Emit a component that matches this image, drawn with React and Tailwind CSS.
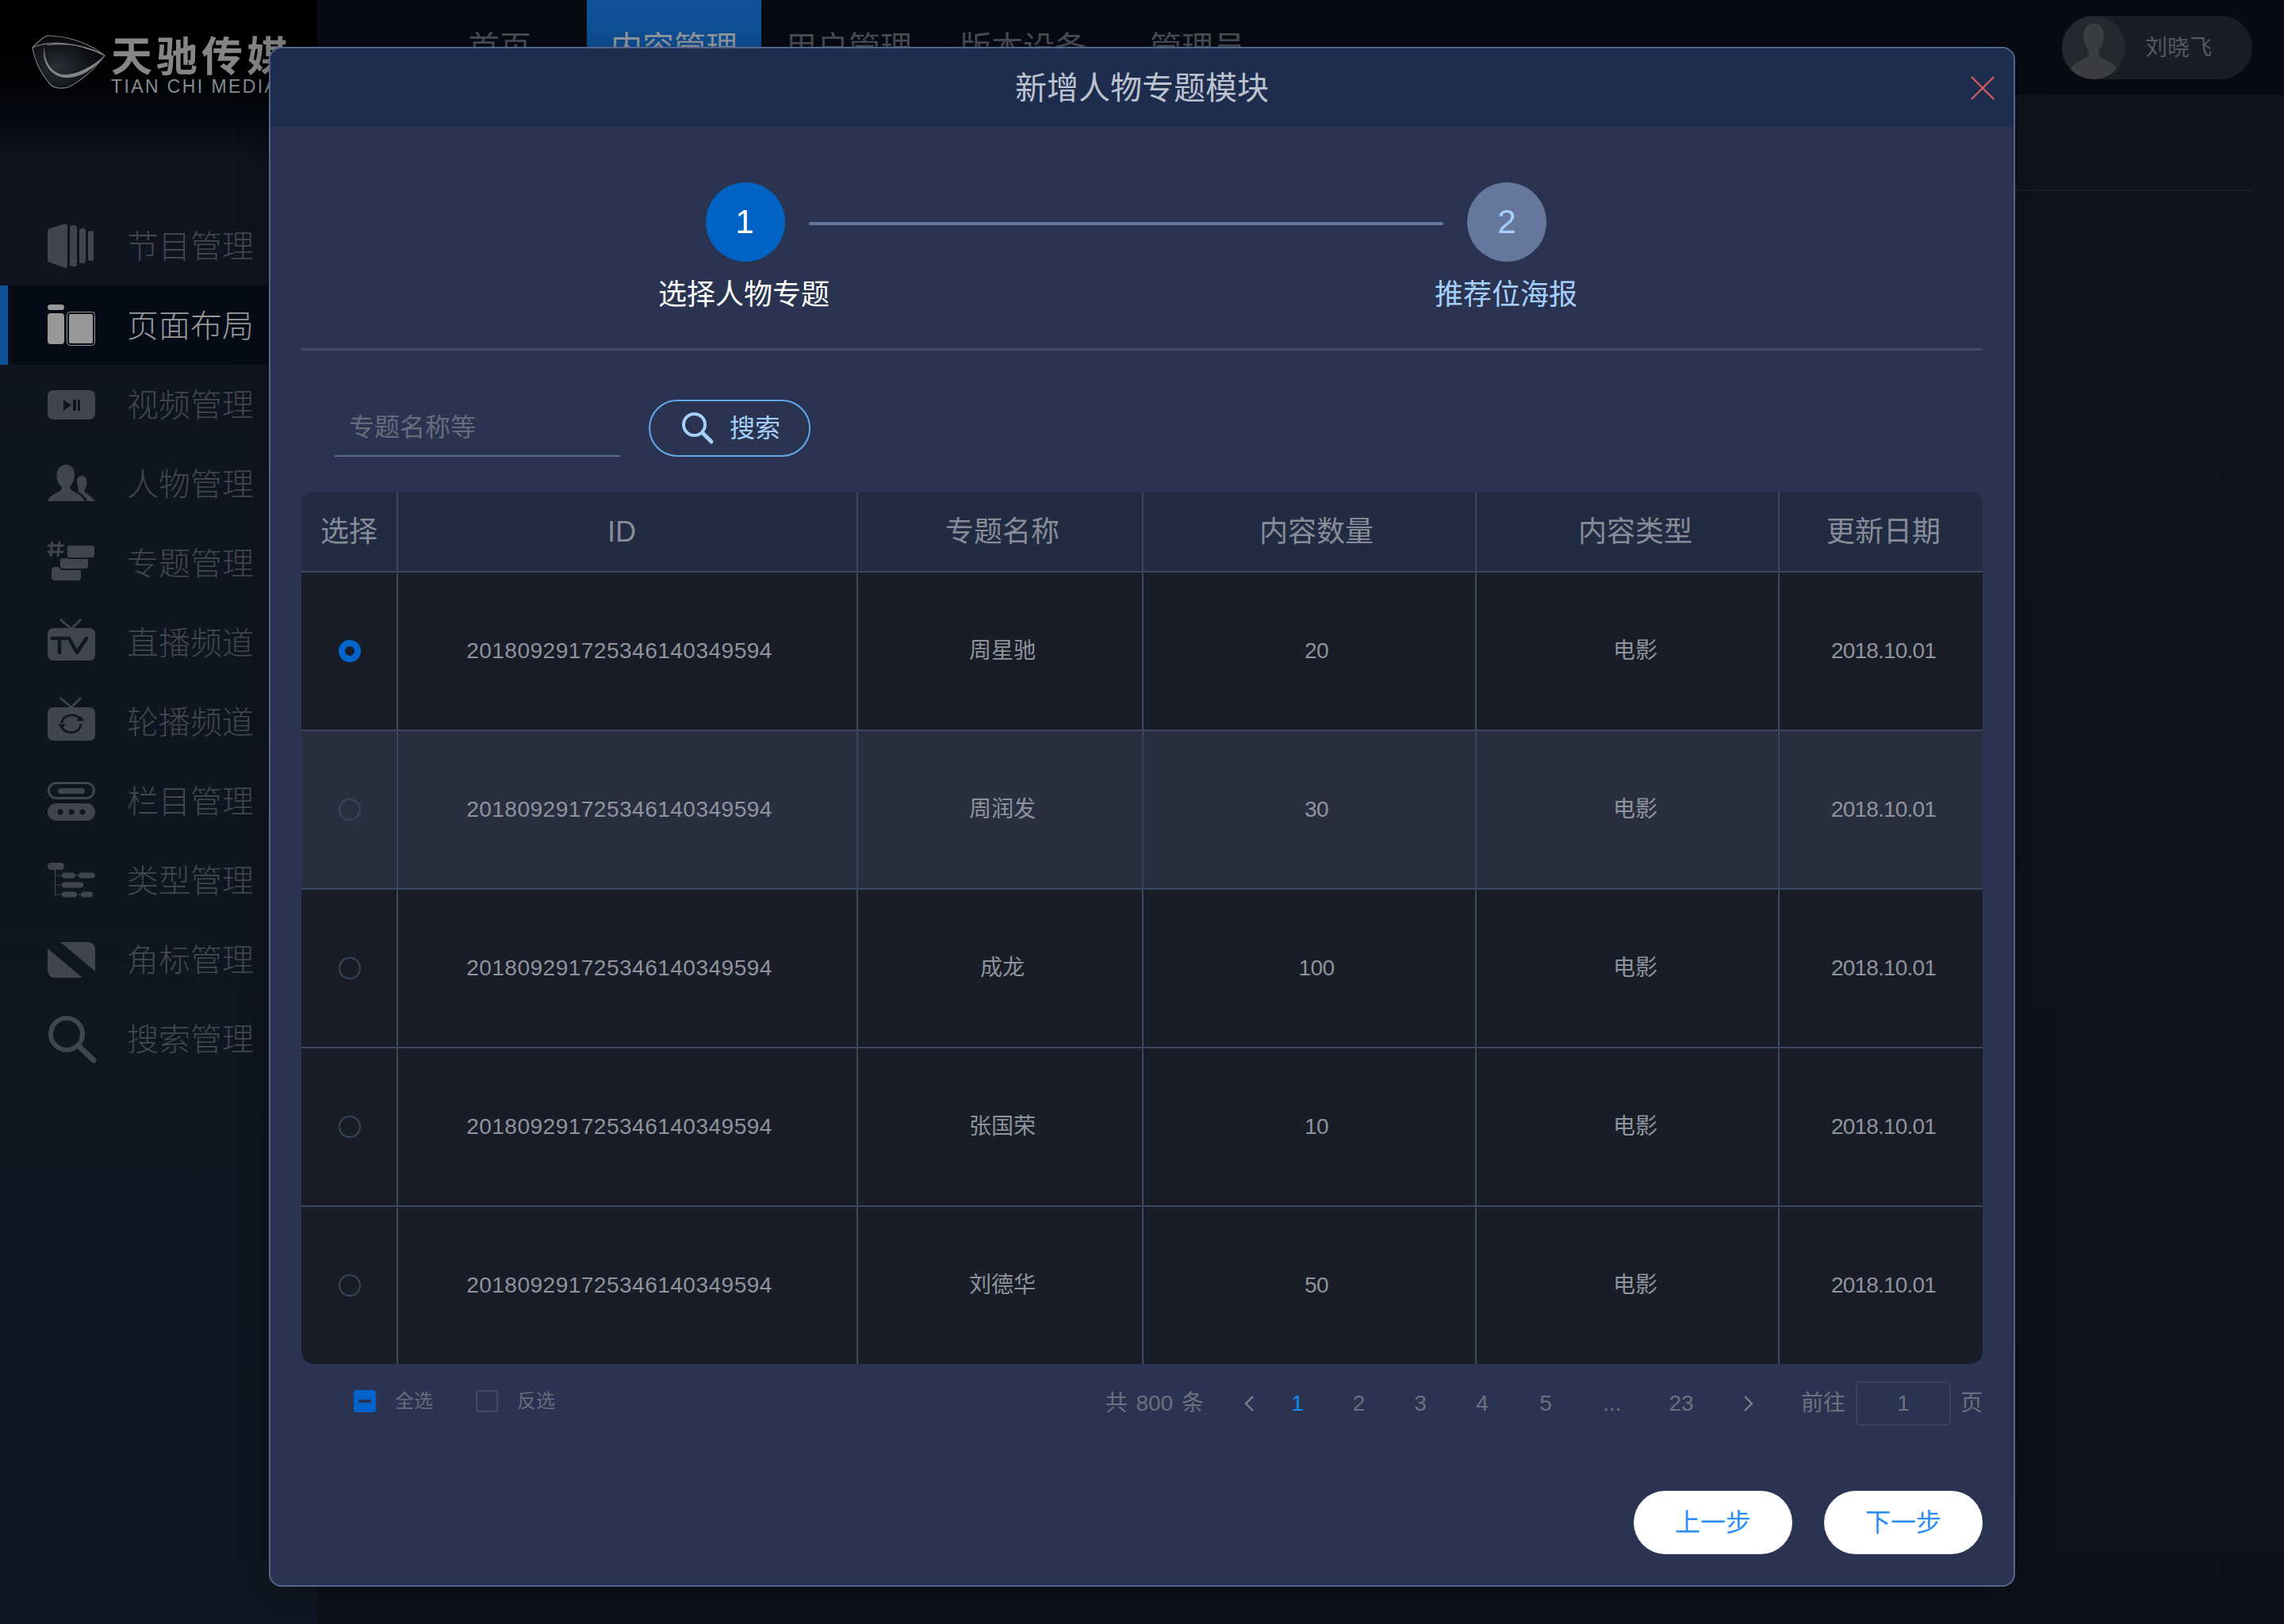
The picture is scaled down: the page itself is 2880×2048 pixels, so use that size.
import React from "react";

const FONT = "font-['Liberation_Sans','Noto_Sans_CJK_SC',sans-serif]";

function Ic({ children }) {
  return (
    <svg width="60" height="60" viewBox="0 0 60 60" className="shrink-0 overflow-visible" fill="currentColor">
      {children}
    </svg>
  );
}

const navItems = [
  {
    label: "节目管理",
    icon: (
      <Ic>
        <path d="M3 8 L21 2.5 Q25 1.5 25 5 L25 55 Q25 59 21 57.5 L3 51 Q0 50 0 47 L0 12 Q0 9 3 8Z" />
        <rect x="28" y="4" width="9" height="52" rx="3" />
        <rect x="40" y="8" width="8" height="44" rx="3" />
        <rect x="51" y="11" width="7" height="38" rx="3" />
      </Ic>
    ),
  },
  {
    label: "页面布局",
    active: true,
    icon: (
      <Ic>
        <rect x="0" y="4" width="21" height="7" rx="3.5" />
        <rect x="0" y="15" width="21" height="39" rx="4" />
        <rect x="24.5" y="13.5" width="35" height="42" rx="4" fill="none" stroke="currentColor" strokeWidth="1" />
        <rect x="27" y="16" width="30" height="37" rx="2" />
      </Ic>
    ),
  },
  {
    label: "视频管理",
    icon: (
      <Ic>
        <path
          fillRule="evenodd"
          d="M8 12 H52 Q60 12 60 20 V41 Q60 49 52 49 H8 Q0 49 0 41 V20 Q0 12 8 12Z M20 24 V38 L30 31Z M32 24 V38 H36 V24Z M38 24 V38 H41 V24Z"
        />
      </Ic>
    ),
  },
  {
    label: "人物管理",
    icon: (
      <Ic>
        <path d="M23 6 C31 6 35 13 34 21 C33 27 31 31 28 34 C28 38 34 40 39 43 C42 45 45 49 47 52 L0 52 C2 47 6 44 12 41 C15 40 18 38 18 34 C14 31 12 26 11.5 21 C11 13 15 6 23 6Z" />
        <path d="M43 20 C48 20 50 25 49.5 29 C49 34 47 37 46 39 C47 42 54 44 60 52 L50 52 C48 47 44 43 38 40 C40 38 38 34 37 29 C36.5 25 38 20 43 20Z" />
      </Ic>
    ),
  },
  {
    label: "专题管理",
    icon: (
      <Ic>
        <path d="M6 3 L4 22 M15 3 L13 22 M0 8 H21 M0 16 H20" fill="none" stroke="currentColor" strokeWidth="3" />
        <rect x="5" y="35" width="37" height="17" rx="4" />
        <rect x="15" y="23" width="37" height="15" rx="4" stroke="#101623" strokeWidth="2" />
        <rect x="24" y="7" width="36" height="17" rx="4" stroke="#101623" strokeWidth="2" />
      </Ic>
    ),
  },
  {
    label: "直播频道",
    icon: (
      <Ic>
        <path d="M16 1 L30 13 L42 1" fill="none" stroke="currentColor" strokeWidth="2.5" />
        <rect x="0" y="12" width="60" height="41" rx="7" />
        <path d="M6 25 H24 M15 25 V43 M27 25 L37 43 L49 25" fill="none" stroke="#101623" strokeWidth="4.5" strokeLinecap="round" strokeLinejoin="round" />
      </Ic>
    ),
  },
  {
    label: "轮播频道",
    icon: (
      <Ic>
        <path d="M16 0 L30 12 L42 0" fill="none" stroke="currentColor" strokeWidth="2.5" />
        <rect x="0" y="12" width="60" height="42" rx="7" />
        <path d="M18 32 C18 20 38 18 42 29 M42 33 C41 46 22 47 18 37" fill="none" stroke="#101623" strokeWidth="3" />
        <path d="M13 33 L23 33 L18 39Z M37 29 L46 29 L42 23Z" fill="#101623" />
      </Ic>
    ),
  },
  {
    label: "栏目管理",
    icon: (
      <Ic>
        <rect x="1.5" y="7.5" width="57" height="19" rx="9.5" fill="none" stroke="currentColor" strokeWidth="3" />
        <rect x="13" y="14" width="34" height="7" rx="3.5" />
        <rect x="0" y="33" width="60" height="22" rx="11" />
        <circle cx="16" cy="44" r="3.5" fill="#101623" />
        <circle cx="30" cy="44" r="3.5" fill="#101623" />
        <circle cx="44" cy="44" r="3.5" fill="#101623" />
      </Ic>
    ),
  },
  {
    label: "类型管理",
    icon: (
      <Ic>
        <path d="M9.5 14 V48 H20 M9.5 24 H20 M9.5 36 H20" fill="none" stroke="currentColor" strokeWidth="1.2" />
        <rect x="0" y="8" width="21" height="9" rx="4.5" />
        <rect x="18" y="20.5" width="17" height="7" rx="3.5" />
        <rect x="39" y="20.5" width="21" height="7" rx="3.5" />
        <rect x="18" y="32.5" width="27" height="7" rx="3.5" />
        <rect x="18" y="44.5" width="19" height="7" rx="3.5" />
        <rect x="42" y="44.5" width="15" height="7" rx="3.5" />
        <path d="M35 24 H39 M37 48 H42" stroke="currentColor" strokeWidth="1.2" />
      </Ic>
    ),
  },
  {
    label: "角标管理",
    icon: (
      <Ic>
        <path d="M16 8 H50 Q60 8 60 18 V45Z" />
        <path d="M0 16 L44 53 H10 Q0 53 0 43Z" />
      </Ic>
    ),
  },
  {
    label: "搜索管理",
    icon: (
      <Ic>
        <circle cx="24" cy="24" r="20" fill="none" stroke="currentColor" strokeWidth="6" />
        <path d="M40 40 L58 57" fill="none" stroke="currentColor" strokeWidth="7" strokeLinecap="round" />
      </Ic>
    ),
  },
];

const rows = [
  { name: "周星驰", count: "20", checked: true },
  { name: "周润发", count: "30", hover: true },
  { name: "成龙", count: "100" },
  { name: "张国荣", count: "10" },
  { name: "刘德华", count: "50" },
];

const GRID = "grid grid-cols-[122px_580px_360px_420px_382px_256px]";

function Logo() {
  return (
    <div className="flex items-start pt-[44px] pl-[40px] h-[260px]">
      <svg width="93" height="69" viewBox="0 0 93 69" className="shrink-0">
        <defs>
          <radialGradient id="lg" cx="0.35" cy="0.6" r="0.6">
            <stop offset="0" stopColor="#2c2f36" />
            <stop offset="1" stopColor="#06080d" />
          </radialGradient>
        </defs>
        <path d="M1 16 C8 8 14 4 19 1 C45 1 72 10 92 26 C80 42 66 56 46 66 C38 68 30 67 25 64 C12 50 4 34 1 16Z" fill="url(#lg)" stroke="#7f7f7f" strokeWidth="1.2" />
        <path d="M1 16 C22 7 55 8 92 26 C72 14 45 9 19 13" fill="none" stroke="#7f7f7f" strokeWidth="1.2" />
        <path d="M16 14 C15 34 26 49 40 50 C56 51 76 40 92 26 C78 44 60 55 42 54 C24 52 12 36 16 14Z" fill="#858585" />
      </svg>
      <div className="ml-[7px] mt-[2px] flex flex-col shrink-0">
        <span className="text-[52px] leading-[52px] font-bold tracking-[5px] text-[#868686] whitespace-nowrap">天驰传媒</span>
        <span className="text-[23px] leading-[18px] mt-[2px] tracking-[2.4px] text-[#868c90] whitespace-nowrap">TIAN CHI MEDIA</span>
      </div>
    </div>
  );
}

function Sidebar() {
  return (
    <aside className="w-[400px] h-full shrink-0 bg-gradient-to-b from-[#000000] via-[#0f1420] via-10% to-[#101623] overflow-hidden">
      <Logo />
      {navItems.map((n) => (
        <div
          key={n.label}
          className={
            "h-[100px] flex items-center pl-[60px] " +
            (n.active ? "bg-[#060b18] text-[#979797] border-l-[10px] border-[#0f5299] !pl-[50px]" : "text-[#41454f]")
          }
        >
          {n.icon}
          <span className={"ml-[40px] pt-[2px] text-[40px] leading-none font-light " + (n.active ? "text-[#989898]" : "text-[#42464f]")}>{n.label}</span>
        </div>
      ))}
    </aside>
  );
}

function TopBar() {
  const tabs = ["首页", "内容管理", "用户管理", "版本设备", "管理员"];
  return (
    <header className="h-[120px] bg-[#070b14] flex items-center pl-[120px] pr-[40px]">
      <nav className="flex h-full">
        {tabs.map((t, i) => (
          <div
            key={t}
            className={
              "w-[220px] h-full flex items-center justify-center text-[40px] " +
              (i === 1 ? "bg-[#0f5299] text-[#9aa0a8]" : "text-[#4c5058]")
            }
          >
            {t}
          </div>
        ))}
      </nav>
      <div className="ml-auto w-[240px] h-[80px] rounded-full bg-[#1a1d24] flex items-center">
        <svg width="80" height="80" viewBox="0 0 80 80" className="shrink-0">
          <circle cx="40" cy="40" r="40" fill="#25282f" />
          <clipPath id="av">
            <circle cx="40" cy="40" r="40" />
          </clipPath>
          <path
            clipPath="url(#av)"
            d="M40 10 C49 10 53 17 53 26 C53 36 47 41 46 47 C46 52 52 54 60 58 C66 61 69 65 70 69 L70 84 H10 L10 69 C11 65 15 61 21 58 C28 54 34 52 34 47 C33 41 27 36 27 26 C27 17 31 10 40 10Z"
            fill="#3c3d41"
          />
        </svg>
        <span className="ml-[25px] pt-[2px] text-[28px] text-[#56585e] leading-none">刘晓飞</span>
      </div>
    </header>
  );
}

function HeadCell({ children, className = "" }) {
  return (
    <div className={"flex items-center justify-center pt-[2px] text-[36px] text-[#878c98] border-r-2 border-[#3c4660] last:border-r-0 " + className}>
      {children}
    </div>
  );
}

function Cell({ children, className = "" }) {
  return (
    <div className={"flex items-center justify-center text-[28px] text-[#8f939e] border-r-2 border-[#3c4660] last:border-r-0 " + className}>
      {children}
    </div>
  );
}

function Table() {
  return (
    <div className="mt-[44px] rounded-[16px] overflow-hidden">
      <div className={GRID + " h-[102px] bg-[#212b41] border-b-2 border-[#3c4660]"}>
        <HeadCell>选择</HeadCell>
        <HeadCell className="pr-[14px]">ID</HeadCell>
        <HeadCell className="pl-[6px]">专题名称</HeadCell>
        <HeadCell className="pl-[18px]">内容数量</HeadCell>
        <HeadCell className="pl-[20px]">内容类型</HeadCell>
        <HeadCell className="pl-[6px]">更新日期</HeadCell>
      </div>
      {rows.map((r, i) => (
        <div
          key={r.name}
          className={
            GRID +
            " " +
            (i === 4 ? "h-[198px] " : "h-[200px] border-b-[2px] border-[#3c4660] ") +
            (r.hover ? "bg-[#2a2f40]" : "bg-[#181d27]")
          }
        >
          <Cell className="pl-[2px]">
            {r.checked ? (
              <span className="w-[28px] h-[28px] rounded-full border-[8px] border-[#0066cc]" />
            ) : (
              <span className="w-[28px] h-[28px] rounded-full border-2 border-[#3a455c]" />
            )}
          </Cell>
          <Cell className="pr-[20px] tracking-[0.5px]">201809291725346140349594</Cell>
          <Cell className="pl-[6px]">{r.name}</Cell>
          <Cell className="pl-[18px] tracking-[-0.6px]">{r.count}</Cell>
          <Cell className="pl-[20px]">电影</Cell>
          <Cell className="pl-[6px] tracking-[-0.8px]">2018.10.01</Cell>
        </div>
      ))}
    </div>
  );
}

function Pager() {
  const pages = [
    ["1", "w-[78px] ml-[6px] text-[#1a86f0]"],
    ["2", "w-[77px]"],
    ["3", "w-[78px]"],
    ["4", "w-[78px]"],
    ["5", "w-[82px]"],
    ["...", "w-[86px]"],
    ["23", "w-[88px]"],
  ];
  return (
    <div className="flex items-center text-[28px] text-[#6b7180] h-[56px]">
      <span className="[word-spacing:3px] whitespace-nowrap">共 800 条</span>
      <svg width="30" height="30" viewBox="0 0 30 30" className="ml-[43px]" fill="none" stroke="#7b808c" strokeWidth="2.4">
        <path d="M19 6 L10 15 L19 24" />
      </svg>
      {pages.map(([p, c]) => (
        <span key={p} className={"text-center leading-none " + c}>
          {p}
        </span>
      ))}
      <svg width="80" height="30" viewBox="0 0 80 30" fill="none" stroke="#7b808c" strokeWidth="2.4">
        <path d="M36 6 L45 15 L36 24" />
      </svg>
      <span className="ml-[27px] whitespace-nowrap">前往</span>
      <span className="ml-[13px] w-[120px] h-[56px] rounded-[6px] border-2 border-[#3a455c] flex items-center justify-center">1</span>
      <span className="ml-[12px]">页</span>
    </div>
  );
}

function Modal() {
  return (
    <div className="absolute left-[339px] top-[59px] w-[2202px] h-[1942px] rounded-[16px] border-2 border-[#53658f] bg-[#2a3450] overflow-hidden shadow-[0_0_40px_rgba(0,0,0,0.3)] flex flex-col">
      <div className="h-[99px] shrink-0 bg-[#1e2c4e] flex items-center justify-center relative">
        <h2 className="text-[40px] leading-none text-[#bcc2cf] font-normal">新增人物专题模块</h2>
        <svg width="30" height="30" viewBox="0 0 30 30" className="absolute right-[24px] top-[35px]" fill="none" stroke="#cf5b5e" strokeWidth="2.4" strokeLinecap="round">
          <path d="M1.5 1.5 L28.5 28.5 M28.5 1.5 L1.5 28.5" />
        </svg>
      </div>
      <div className="flex-1 pl-[39px] pr-[39px] flex flex-col">
        <div className="pt-[70px] pl-[510px] flex items-center">
          <div className="w-[100px] h-[100px] rounded-full bg-[#0063c4] text-white text-[42px] flex items-center justify-center leading-none pr-[2px]">1</div>
          <div className="ml-[30px] w-[800px] h-[4px] mt-[4px] rounded-full bg-[#65779d]" />
          <div className="ml-[30px] w-[100px] h-[100px] rounded-full bg-[#65779d] text-[#a6d0fb] text-[42px] flex items-center justify-center leading-none">2</div>
        </div>
        <div className="mt-[17px] flex h-[50px] items-center text-[36px] leading-none">
          <span className="ml-[450px] w-[216px] text-center text-white whitespace-nowrap">选择人物专题</span>
          <span className="ml-[763px] w-[180px] text-center text-[#a6d0fb] whitespace-nowrap">推荐位海报</span>
        </div>
        <div className="mt-[42px] h-[3px] bg-[#3f4b69]" />
        <div className="mt-[62px] flex items-center h-[72px]">
          <div className="ml-[42px] w-[360px] h-[72px] border-b-2 border-[#5b6d94] pl-[18px] flex items-center text-[32px] text-[#666c7c] leading-none">专题名称等</div>
          <button className="ml-[36px] w-[204px] h-[72px] rounded-full border-2 border-[#63a6ea] flex items-center pl-[39px] text-[32px] text-[#a6d0fb] leading-none">
            <svg width="42" height="42" viewBox="0 0 42 42" fill="none" stroke="#a6d0fb" className="shrink-0">
              <circle cx="16.5" cy="16.5" r="13.5" strokeWidth="4" />
              <path d="M27 27 L38 38" strokeWidth="5" strokeLinecap="round" />
            </svg>
            <span className="ml-[19px]">搜索</span>
          </button>
        </div>
        <Table />
        <div className="mt-[22px] flex items-center justify-between">
          <div className="flex items-center text-[24px] text-[#666c7c] leading-none -mt-[6px]">
            <span className="ml-[66px] w-[28px] h-[28px] rounded-[4px] bg-[#0063cc] flex items-center justify-center">
              <span className="w-[16px] h-[4px] rounded-[1px] bg-[#2a3450]" />
            </span>
            <span className="ml-[24px]">全选</span>
            <span className="ml-[54px] w-[28px] h-[28px] rounded-[4px] border-2 border-[#3f4b69]" />
            <span className="ml-[24px]">反选</span>
          </div>
          <Pager />
        </div>
        <div className="mt-[82px] flex justify-end gap-[40px]">
          <button className="w-[200px] h-[80px] rounded-full bg-white text-[#2a8cf5] text-[32px] leading-none">上一步</button>
          <button className="w-[200px] h-[80px] rounded-full bg-white text-[#2a8cf5] text-[32px] leading-none">下一步</button>
        </div>
      </div>
    </div>
  );
}

export default function App() {
  return (
    <div className={"relative w-[2880px] h-[2048px] overflow-hidden flex bg-[#0e121b] " + FONT}>
      <Sidebar />
      <main className="flex-1 min-w-0 bg-gradient-to-b from-[#10141d] to-[#0d111a]">
        <TopBar />
        <div className="h-[121px] mr-[40px] border-b-2 border-[#191d26]" />
      </main>
      <Modal />
    </div>
  );
}
